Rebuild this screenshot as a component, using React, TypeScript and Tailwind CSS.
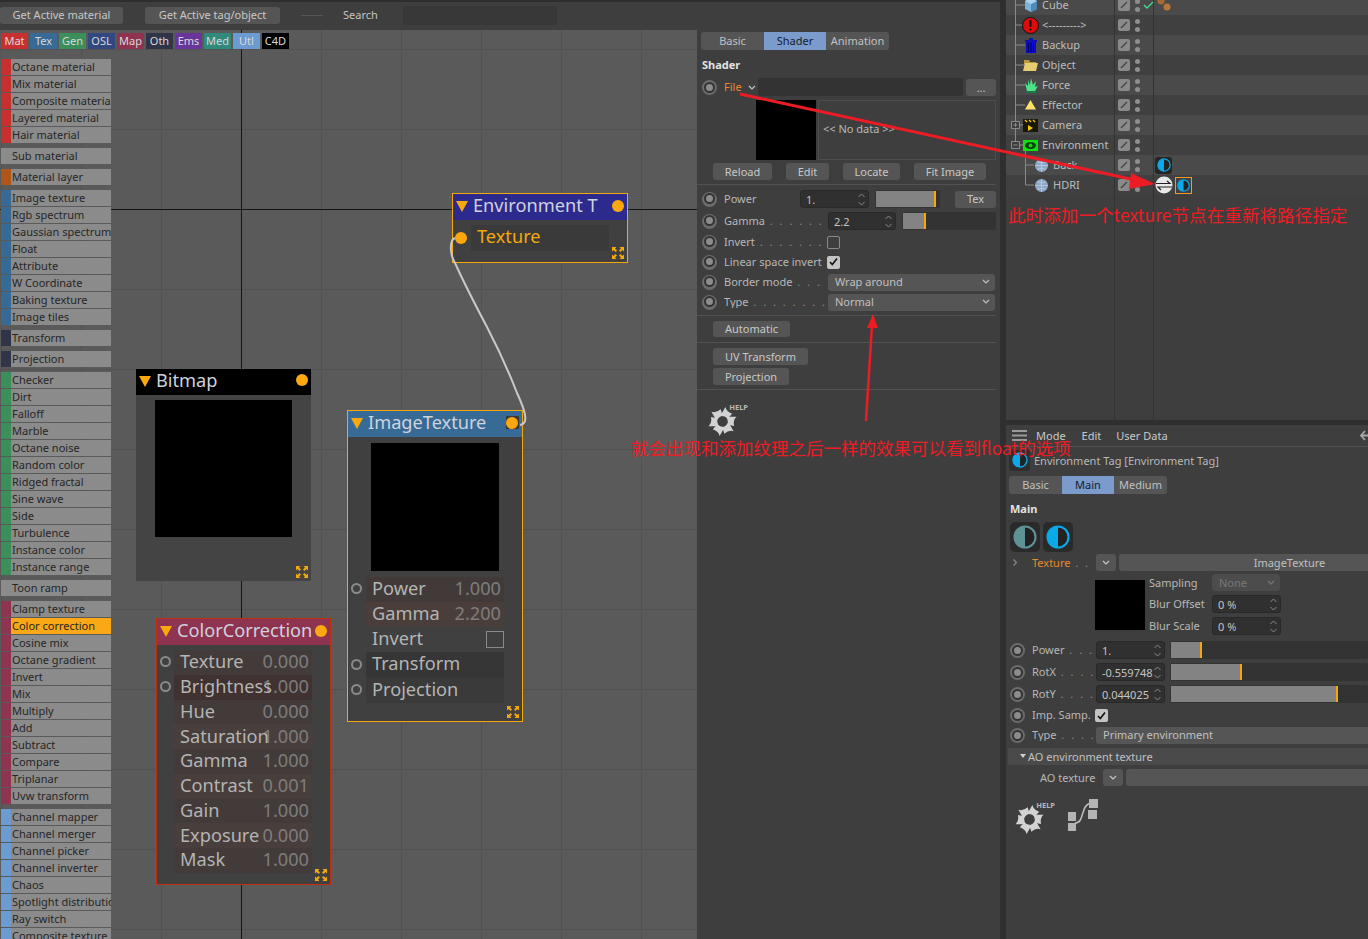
import React from "react";

const font = "font-['Noto_Sans','Open_Sans',sans-serif]";

function Radio() {
  return (
    <span className="flex h-[15px] w-[15px] shrink-0 items-center justify-center rounded-full bg-[#6c6c6c]">
      <span className="h-[11px] w-[11px] rounded-full border-2 border-[#333] bg-[#8c8c8c]" />
    </span>
  );
}

function Chevron({ className = "" }: { className?: string }) {
  return (
    <svg width="8" height="5" viewBox="0 0 8 5" className={className}>
      <path d="M1 1l3 3 3-3" fill="none" stroke="currentColor" strokeWidth="1.2" />
    </svg>
  );
}

function Spin({ value, className = "" }: { value: string; className?: string }) {
  return (
    <div className={"flex h-[18px] items-center justify-between rounded-[3px] border border-[#292929] bg-[#303030] pl-[5px] pr-[3px] text-[#c4c4c4] " + className}>
      <span className="overflow-hidden whitespace-nowrap">{value}</span>
      <svg width="7" height="13" viewBox="0 0 7 13" className="shrink-0 text-[#8a8a8a]">
        <path d="M.5 4L3.500 1l3 3M.5 9l3 3 3-3" fill="none" stroke="currentColor" />
      </svg>
    </div>
  );
}

function Bar({ pct, className = "" }: { pct: number; className?: string }) {
  return (
    <div className={"flex h-[18px] items-stretch rounded-[2px] bg-[#333] p-px " + className}>
      <div className="border-r-2 border-[#f5a80c] bg-[#838383]" style={{ width: pct + "%" }} />
    </div>
  );
}

function Btn({ children, className = "" }: { children: React.ReactNode; className?: string }) {
  return (
    <div className={"flex items-center justify-center rounded-[3px] bg-[#555] text-[#c8c8c8] " + className}>{children}</div>
  );
}

function Select({ value, className = "" }: { value: string; className?: string }) {
  return (
    <div className={"flex h-[17px] items-center justify-between rounded-[3px] bg-[#555] pl-[7px] pr-[5px] text-[#c0c0c0] " + className}>
      <span>{value}</span>
      <Chevron />
    </div>
  );
}

function Check({ on }: { on?: boolean }) {
  return on ? (
    <span className="flex h-[13px] w-[13px] items-center justify-center rounded-[2px] bg-[#c4c4c4]">
      <svg width="9" height="9" viewBox="0 0 9 9">
        <path d="M1 5l2.300 2.500L8 1.500" fill="none" stroke="#111" strokeWidth="1.6" />
      </svg>
    </span>
  ) : (
    <span className="h-[13px] w-[13px] rounded-[2px] border border-[#8a8a8a]" />
  );
}

function Sep({ className = "" }: { className?: string }) {
  return <div className={"h-px bg-[#525252] " + className} />;
}

function Dots({ n }: { n: number }) {
  return <span className="tracking-[2px] text-[#8a8a8a]">{" " + ". ".repeat(n).trim()}</span>;
}

function HelpIcon({ graph }: { graph?: boolean }) {
  return (
    <div className="flex items-start gap-3">
      <div className="relative h-[33px] w-[40px]">
        <svg width="29" height="29" viewBox="-15 -15 30 30" className="absolute bottom-0 left-0">
          {[0, 60, 120, 180, 240, 300].map((a) => (
            <path key={a} transform={`rotate(${a})`} d="M-2.500-5.500L3-15Q4-10 10-8L5.500-3Q2-6-2.500-5.500z" fill="#d2d2d2" />
          ))}
        </svg>
        <span className="absolute right-0 top-0 text-[7.5px] font-bold leading-[9px] text-[#b8b8b8]">HELP</span>
      </div>
      {graph && (
        <svg width="32" height="32" viewBox="0 0 32 32" className="mt-[-2px]">
          <path d="M8 24c10 0 5-18 16-20" fill="none" stroke="#bbb" strokeWidth="1.6" />
          <path d="M22 0h9v9h-9zM21 11h9v9h-9zM1 13h8v9H1zM1 24h8v8H1z" fill="#b4b4b4" />
        </svg>
      )}
    </div>
  );
}

function HalfCircle({ size = 16, color = "#0aa9e9" }: { size?: number; color?: string }) {
  return (
    <svg width={size} height={size} viewBox="0 0 16 16">
      <circle cx="8" cy="8" r="7" fill="#222" stroke={color} strokeWidth="1.4" />
      <path d="M8 1a7 7 0 0 0 0 14z" fill={color} />
    </svg>
  );
}

/* ---------- palette ---------- */

const groups: { color: string; items: string[] }[] = [
  { color: "#c8302f", items: ["Octane material", "Mix material", "Composite material", "Layered material", "Hair material"] },
  { color: "", items: ["Sub material"] },
  { color: "#b0561a", items: ["Material layer"] },
  { color: "#376a94", items: ["Image texture", "Rgb spectrum", "Gaussian spectrum", "Float", "Attribute", "W Coordinate", "Baking texture", "Image tiles"] },
  { color: "#2f3449", items: ["Transform"] },
  { color: "#2f3449", items: ["Projection"] },
  { color: "#3a8f5a", items: ["Checker", "Dirt", "Falloff", "Marble", "Octane noise", "Random color", "Ridged fractal", "Sine wave", "Side", "Turbulence", "Instance color", "Instance range"] },
  { color: "", items: ["Toon ramp"] },
  { color: "#8e3350", items: ["Clamp texture", "Color correction", "Cosine mix", "Octane gradient", "Invert", "Mix", "Multiply", "Add", "Subtract", "Compare", "Triplanar", "Uvw transform"] },
  { color: "#6c9bd2", items: ["Channel mapper", "Channel merger", "Channel picker", "Channel inverter", "Chaos", "Spotlight distribution", "Ray switch", "Composite texture"] },
];

const tabs: [string, string][] = [
  ["Mat", "bg-[#c8302f]"],
  ["Tex", "bg-[#376a94]"],
  ["Gen", "bg-[#3a8f5a]"],
  ["OSL", "bg-[#33487f]"],
  ["Map", "bg-[#8e3350]"],
  ["Oth", "bg-[#2f3449]"],
  ["Ems", "bg-[#6a359b]"],
  ["Med", "bg-[#318a7c]"],
  ["Utl", "bg-[#6c9bd2]"],
  ["C4D", "bg-black"],
];

function Palette() {
  return (
    <div className="flex w-[111px] flex-col gap-[5px] pl-px">
      {groups.map((g, i) => (
        <div key={i} className="flex flex-col gap-px">
          {g.items.map((it) => {
            const active = it === "Color correction";
            return (
              <div key={it} className={"flex h-[16px] items-center overflow-hidden " + (active ? "bg-[#fba816]" : "bg-[#8b8b8b]")}>
                <span className="h-full w-[10px] shrink-0 bg-[#8b8b8b]" style={g.color ? { background: g.color } : undefined} />
                <span className="whitespace-nowrap pb-[2px] pl-px text-[#262626]">{it}</span>
              </div>
            );
          })}
        </div>
      ))}
    </div>
  );
}

/* ---------- nodes ---------- */

function Expand() {
  return (
    <svg width="12" height="12" viewBox="0 0 12 12" className="absolute bottom-[3px] right-[3px]">
      <path d="M0 0h4.500L3 1.500 5 3.500 3.500 5 1.500 3 0 4.500zM12 0v4.500L10.500 3 8.500 5 7 3.500 9 1.500 7.500 0zM0 12V7.500L1.500 9l2-2L5 8.500 3 10.500 4.500 12zM12 12H7.500L9 10.500l-2-2L8.500 7l2 2L12 7.500z" fill="#f5a80c" />
    </svg>
  );
}

function Dot({ className = "" }: { className?: string }) {
  return <span className={"absolute h-[12px] w-[12px] rounded-full bg-[#fba80e] " + className} />;
}

function Port({ top }: { top: number }) {
  return <span className="absolute left-[3px] h-[11px] w-[11px] rounded-full border-2 border-[#8a8a8a]" style={{ top }} />;
}

function NodeHead({ title, className = "" }: { title: string; className?: string }) {
  return (
    <div className={"relative flex h-[26px] shrink-0 items-center pb-[4px] pl-[3px] text-[18.2px] leading-none text-[#cfd2dc] " + className}>
      <svg width="12" height="11" viewBox="0 0 12 11" className="mr-[5px] mt-[2px] shrink-0">
        <path d="M0 0h12L6 11z" fill="#fba80e" />
      </svg>
      <span className="whitespace-nowrap">{title}</span>
    </div>
  );
}

function NodeRow({ label, value, className = "", box }: { label: string; value?: string; className?: string; box?: boolean }) {
  return (
    <div className={"relative flex items-center justify-end pb-[2px] pr-[3px] text-[18.2px] leading-none text-[#b4b4b4] " + className}>
      <span className="absolute left-[6px] whitespace-nowrap">{label}</span>
      {value && <span className="text-[#7d7d7d]">{value}</span>}
      {box && <span className="mr-[-3px] mt-[2px] h-[17px] w-[18px] border border-[#8a8a8a]" />}
    </div>
  );
}

function Nodes() {
  const cc: [string, string][] = [
    ["Texture", "0.000"],
    ["Brightness", "1.000"],
    ["Hue", "0.000"],
    ["Saturation", "1.000"],
    ["Gamma", "1.000"],
    ["Contrast", "0.001"],
    ["Gain", "1.000"],
    ["Exposure", "0.000"],
    ["Mask", "1.000"],
  ];
  return (
    <>
      {/* Environment T */}
      <div className="absolute left-[452px] top-[163px] h-[70px] w-[176px] border border-[#f5a80c] bg-[#404040]">
        <NodeHead title="Environment T" className="bg-[#2d2a8e]" />
        <Dot className="right-[3px] top-[6px]" />
        <Dot className="left-[2px] top-[38px]" />
        <div className="ml-[18px] mt-[5px] flex h-[26px] w-[138px] items-center bg-[#3a3a3a] pb-[3px] pl-[6px] text-[18.2px] leading-none text-[#f5a80c]">Texture</div>
        <Expand />
      </div>

      {/* Bitmap */}
      <div className="absolute left-[136px] top-[339px] h-[212px] w-[175px] bg-[#444]">
        <NodeHead title="Bitmap" className="bg-black" />
        <Dot className="right-[3px] top-[5px]" />
        <div className="ml-[19px] mt-[5px] h-[137px] w-[137px] bg-black" />
        <Expand />
      </div>

      {/* ImageTexture */}
      <div className="absolute left-[347px] top-[380px] h-[312px] w-[176px] border border-[#f5a80c] bg-[#404040]">
        <NodeHead title="ImageTexture" className="bg-[#376a94]" />
        <span className="absolute right-[3px] top-[5px] h-[13px] w-[13px] bg-[#3a3a3a]" />
        <Dot className="right-[4px] top-[6px]" />
        <div className="ml-[23px] mt-[6px] h-[128px] w-[128px] bg-black" />
        <div className="ml-[18px] mt-[6px] w-[138px]">
          <NodeRow label="Power" value="1.000" className="h-[25px] bg-[#423a38]" />
          <NodeRow label="Gamma" value="2.200" className="h-[25px] bg-[#4a3e3b]" />
          <NodeRow label="Invert" box className="h-[25px]" />
          <NodeRow label="Transform" className="h-[25px] bg-[#363636]" />
          <NodeRow label="Projection" className="h-[26px] bg-[#3a3a3a]" />
        </div>
        <Port top={172} />
        <Port top={248} />
        <Port top={273} />
        <Expand />
      </div>

      {/* ColorCorrection */}
      <div className="absolute left-[156px] top-[588px] h-[267px] w-[175px] border border-[#c0300f] bg-[#404040]">
        <NodeHead title="ColorCorrection" className="bg-[#8e3350]" />
        <Dot className="right-[3px] top-[6px]" />
        <div className="ml-[17px] mt-[5px] w-[138px]">
          {cc.map(([l, v], i) => (
            <NodeRow key={l} label={l} value={v} className={"h-[24.75px] " + (i === 1 ? "bg-[#3f3230]" : i % 2 ? "bg-[#483e3b]" : "bg-[#433b39]")} />
          ))}
        </div>
        <Port top={37} />
        <Port top={62} />
        <Expand />
      </div>
    </>
  );
}

/* ---------- shader panel ---------- */

function TabStrip({ items, active, className = "" }: { items: [string, number][]; active: string; className?: string }) {
  return (
    <div className={"flex h-[18px] overflow-hidden rounded-[3px] " + className}>
      {items.map(([t, w]) => (
        <div key={t} style={{ width: w }} className={"flex items-center justify-center pb-px " + (t === active ? "bg-[#7a9bcb] text-[#16202c]" : "bg-[#555] text-[#c0c0c0]")}>
          {t}
        </div>
      ))}
    </div>
  );
}

function PanelRow({ top, children }: { top: number; children: React.ReactNode }) {
  return (
    <div className="flex h-[18px] items-center pl-[5px] text-[#b8b8b8] [&>span]:pb-px" style={{ marginTop: top }}>
      <Radio />
      {children}
    </div>
  );
}

function ShaderPanel() {
  return (
    <div className="flex w-[303px] shrink-0 flex-col bg-[#3e3e3e] pr-[4px] pt-[2px]">
      <TabStrip className="ml-[4px] w-[188px]" active="Shader" items={[["Basic", 63], ["Shader", 62], ["Animation", 63]]} />
      <div className="ml-[5px] mt-[7px] h-[16px] font-bold leading-[16px] text-[#e2e2e2]">Shader</div>
      <div className="mt-[5px] flex h-[18px] items-center pl-[5px]">
        <Radio />
        <span className="ml-[7px] pb-[2px] text-[#e88a2d]">File</span>
        <Chevron className="ml-[6px] text-[#c8c8c8]" />
        <div className="ml-[2px] h-[18px] w-[207px] rounded-[3px] bg-[#333]" />
        <Btn className="ml-[3px] h-[17px] w-[30px]">...</Btn>
      </div>
      <div className="ml-[59px] mt-[4px] flex h-[60px] gap-[2px]">
        <div className="w-[60px] bg-black" />
        <div className="flex w-[178px] items-center border border-[#4d4d4d] pb-[3px] pl-[4px] text-[#b8b8b8]">{"<< No data >>"}</div>
      </div>
      <div className="ml-[16px] mt-[3px] flex h-[17px] gap-[14px]">
        <Btn className="w-[59px] pb-px">Reload</Btn>
        <Btn className="w-[43px] pb-px">Edit</Btn>
        <Btn className="w-[57px] pb-px">Locate</Btn>
        <Btn className="w-[72px] pb-px">Fit Image</Btn>
      </div>
      <Sep className="mt-[4px]" />
      <PanelRow top={5}>
        <span className="ml-[7px] w-[76px]">Power</span>
        <Spin value="1." className="w-[69px]" />
        <Bar pct={95} className="ml-[6px] w-[65px]" />
        <Btn className="ml-[15px] h-[17px] w-[41px] pb-px">Tex</Btn>
      </PanelRow>
      <PanelRow top={4}>
        <span className="ml-[7px] w-[104px] overflow-hidden whitespace-nowrap">Gamma<Dots n={7} /></span>
        <Spin value="2.2" className="w-[68px]" />
        <Bar pct={25} className="ml-[6px] w-[94px]" />
      </PanelRow>
      <PanelRow top={3}>
        <span className="ml-[7px] w-[103px] overflow-hidden whitespace-nowrap">Invert<Dots n={8} /></span>
        <Check />
      </PanelRow>
      <PanelRow top={2}>
        <span className="ml-[7px] w-[103px] whitespace-nowrap">Linear space invert</span>
        <Check on />
      </PanelRow>
      <PanelRow top={2}>
        <span className="ml-[7px] w-[104px] overflow-hidden whitespace-nowrap">Border mode<Dots n={3} /></span>
        <Select value="Wrap around" className="w-[167px] pb-px" />
      </PanelRow>
      <PanelRow top={2}>
        <span className="ml-[7px] w-[104px] overflow-hidden whitespace-nowrap">Type<Dots n={8} /></span>
        <Select value="Normal" className="w-[167px] pb-px" />
      </PanelRow>
      <Sep className="mt-[4px]" />
      <Btn className="ml-[16px] mt-[5px] h-[16px] w-[77px] pb-px">Automatic</Btn>
      <Sep className="mt-[5px]" />
      <Btn className="ml-[16px] mt-[5px] h-[17px] w-[95px] pb-px">UV Transform</Btn>
      <Btn className="ml-[16px] mt-[3px] h-[17px] w-[76px] pb-px">Projection</Btn>
      <Sep className="mt-[4px]" />
      <div className="ml-[11px] mt-[13px]">
        <HelpIcon />
      </div>
    </div>
  );
}

/* ---------- tree ---------- */

function TreeIcon({ kind }: { kind: string }) {
  switch (kind) {
    case "cube":
      return (
        <svg width="14" height="16" viewBox="0 0 14 16">
          <path d="M7 1l6 3v8l-6 3-6-3V4z" fill="#79b4dc" />
          <path d="M7 7l6-3v8l-6 3z" fill="#4c8ab8" />
          <path d="M1 4l6-3 6 3-6 3z" fill="#a9d4ef" />
        </svg>
      );
    case "stop":
      return (
        <svg width="17" height="17" viewBox="0 0 17 17">
          <circle cx="8.500" cy="8.500" r="8" fill="#e00b0b" stroke="#111" />
          <path d="M7.500 3h2v7h-2zM7.500 11.500h2v2h-2z" fill="#111" />
        </svg>
      );
    case "bin":
      return (
        <svg width="12" height="15" viewBox="0 0 12 15">
          <path d="M0 2h12v2H0zM4 0h4v2H4z" fill="#1111b0" />
          <path d="M1 4h10v11H1z" fill="#0808d0" />
          <path d="M3.500 5v9M6 5v9M8.500 5v9" stroke="#000060" />
        </svg>
      );
    case "folder":
      return (
        <svg width="15" height="12" viewBox="0 0 15 12">
          <path d="M1 1h5l1 2h6v2H1z" fill="#b89b3c" />
          <path d="M0 12l2-8h13l-2 8z" fill="#e6cd72" />
        </svg>
      );
    case "force":
      return (
        <svg width="16" height="15" viewBox="0 0 16 15">
          <path d="M3 13h10l1 2H2z" fill="#187a40" />
          <path d="M4 13L2 5l3 3 0-6 2 5 1-7 2 7 3-4-1 6 3-1-3 5z" fill="#4fe08a" />
        </svg>
      );
    case "tri":
      return (
        <svg width="11" height="10" viewBox="0 0 11 10">
          <path d="M5.500 0L11 9.500H0z" fill="#fde168" />
        </svg>
      );
    case "cam":
      return (
        <svg width="15" height="13" viewBox="0 0 15 13">
          <path d="M0 0h15v13H0z" fill="#1a1608" />
          <path d="M2 1l2 2M6 1l2 2M10 1l2 2" stroke="#f0c800" strokeWidth="1.400" />
          <path d="M5 6l5 3-5 3z" fill="#f0c800" />
        </svg>
      );
    case "env":
      return (
        <svg width="15" height="11" viewBox="0 0 15 11">
          <path d="M0 0h15v11H0z" fill="#10e010" />
          <ellipse cx="7.500" cy="5.500" rx="5.500" ry="3.500" fill="#063c06" />
          <circle cx="7.500" cy="5.500" r="2" fill="#0fd00f" />
        </svg>
      );
    default:
      return (
        <svg width="13" height="13" viewBox="0 0 13 13">
          <circle cx="6.500" cy="6.500" r="6.500" fill="#8fa8c8" />
          <path d="M0 6.500h13M6.500 0v13M2 2.500c3 1.500 6 1.500 9 0M2 10.500c3-1.500 6-1.500 9 0" stroke="#c2d2e6" strokeWidth=".7" fill="none" />
        </svg>
      );
  }
}

const tree: { name: string; icon: string; link: string; deep?: boolean; tag?: React.ReactNode }[] = [
  {
    name: "Cube",
    icon: "cube",
    link: "t",
    tag: (
      <span className="ml-[-12px] flex items-center gap-[3px]">
        <svg width="11" height="8" viewBox="0 0 11 8"><path d="M1 4l3 3 6-6" fill="none" stroke="#44dc8c" strokeWidth="1.400" /></svg>
        <svg width="14" height="20" viewBox="0 0 14 20"><circle cx="4" cy="6" r="3.500" fill="#a86a30" /><circle cx="10" cy="12" r="3.500" fill="#b8753a" /></svg>
      </span>
    ),
  },
  { name: "<--------->", icon: "stop", link: "t" },
  { name: "Backup", icon: "bin", link: "t" },
  { name: "Object", icon: "folder", link: "t" },
  { name: "Force", icon: "force", link: "t" },
  { name: "Effector", icon: "tri", link: "t" },
  { name: "Camera", icon: "cam", link: "p" },
  { name: "Environment", icon: "env", link: "m" },
  {
    name: "Back",
    icon: "ball",
    link: "c",
    deep: true,
    tag: (
      <span className="flex h-[17px] w-[17px] items-center justify-center rounded-[3px] bg-[#262626]">
        <HalfCircle size={14} />
      </span>
    ),
  },
  {
    name: "HDRI",
    icon: "ball",
    link: "l",
    deep: true,
    tag: (
      <span className="flex items-center gap-[2px]">
        <svg width="18" height="18" viewBox="0 0 18 18">
          <circle cx="9" cy="9" r="8.500" fill="#e8e8e8" />
          <path d="M1 7.500h14L12 5M17 11H3l3 3" fill="none" stroke="#222" strokeWidth="1.200" />
        </svg>
        <span className="flex h-[17px] w-[17px] items-center justify-center border border-[#f09a28]">
          <HalfCircle size={13} />
        </span>
      </span>
    ),
  },
];

function Connector({ link }: { link: string }) {
  // left part of a row: tree lines and +/- boxes
  return (
    <svg width="36" height="20" viewBox="0 0 36 20" className="absolute left-0 top-0">
      {(link === "t" || link === "p") && <path d="M9.500 0v20M9.500 10H19" stroke="#8a8a8a" />}
      {link === "m" && <path d="M9.500 0v6M14 10h5" stroke="#8a8a8a" />}
      {link === "p" && <path d="M5.500 6.500h8v7h-8z M7.500 10h4M9.500 8v4" fill="#3e3e3e" stroke="#8a8a8a" />}
      {link === "m" && <path d="M5.500 6.500h8v7h-8z M7.500 10h4M19.500 15v5" fill="#3e3e3e" stroke="#8a8a8a" />}
      {link === "c" && <path d="M19.500 0v20M19.500 10H28" stroke="#8a8a8a" />}
      {link === "l" && <path d="M19.500 0v10H28" stroke="#8a8a8a" fill="none" />}
    </svg>
  );
}

function Tree() {
  return (
    <div className="mt-[-5px] flex h-[425px] flex-col overflow-hidden">
      {tree.map((r, i) => (
        <div key={r.name} className={"flex h-[20px] shrink-0 " + (i % 2 === 0 ? "bg-[#4a4a4a]" : "bg-[#404040]")}>
          <div className={"relative flex w-[108px] shrink-0 items-center text-[#bcbcbc] " + (r.deep ? "pl-[26px]" : "pl-[15px]")}>
            <Connector link={r.link} />
            <span className="relative flex w-[19px] justify-center"><TreeIcon kind={r.icon} /></span>
            <span className="ml-[2px] whitespace-nowrap pb-[2px]">{r.name}</span>
          </div>
          <div className="flex w-[40px] shrink-0 items-center gap-[5px] border-x border-[#333] pl-[3px]">
            <span className="flex h-[12px] w-[12px] items-center justify-center rounded-[2px] bg-[#8a8a8a]">
              <svg width="8" height="8" viewBox="0 0 8 8"><path d="M1 7l6-6" stroke="#444" strokeWidth="1.200" /></svg>
            </span>
            <span className="flex flex-col gap-[3px]">
              <span className="h-[5px] w-[5px] rounded-full bg-[#8e8e8e]" />
              <span className="h-[5px] w-[5px] rounded-full bg-[#8e8e8e]" />
            </span>
          </div>
          <div className="flex items-center pl-[1px]">{r.tag}</div>
        </div>
      ))}
      <div className="flex grow">
        <div className="w-[108px]" />
        <div className="w-[40px] border-x border-[#333]" />
      </div>
    </div>
  );
}

/* ---------- attribute manager ---------- */

function LabeledRow({ label, dots, top, children }: { label: string; dots: number; top: number; children: React.ReactNode }) {
  return (
    <div className="flex h-[18px] items-center pl-[4px] text-[#b8b8b8]" style={{ marginTop: top }}>
      <Radio />
      <span className="ml-[7px] w-[64px] shrink-0 overflow-hidden whitespace-nowrap pb-px">{label}<Dots n={dots} /></span>
      {children}
    </div>
  );
}

function Attributes() {
  return (
    <div className="flex grow flex-col bg-[#3e3e3e]">
      <div className="flex h-[22px] shrink-0 items-center border-b border-[#525252] pb-px text-[#c8c8c8]">
        <svg width="15" height="11" viewBox="0 0 15 11" className="ml-[6px]">
          <path d="M0 0h15v2H0zM0 4.500h15v2H0zM0 9h15v2H0z" fill="#9a9a9a" />
        </svg>
        <span className="ml-[9px]">Mode</span>
        <span className="ml-[16px]">Edit</span>
        <span className="ml-[15px]">User Data</span>
        <svg width="9" height="11" viewBox="0 0 9 11" className="ml-auto mr-0">
          <path d="M6 1L2 5.500 6 10M2 5.500h7" fill="none" stroke="#a8a8a8" strokeWidth="1.800" />
        </svg>
      </div>
      <div className="flex h-[26px] items-center pl-[3px]">
        <span className="flex h-[21px] w-[21px] items-center justify-center rounded-[3px] bg-[#2e2e2e]">
          <HalfCircle size={16} />
        </span>
        <span className="ml-[4px] text-[#b8b8b8]">Environment Tag [Environment Tag]</span>
      </div>
      <TabStrip className="ml-[3px] mt-[3px] w-[158px]" active="Main" items={[["Basic", 53], ["Main", 52], ["Medium", 53]]} />
      <div className="ml-[4px] mt-[7px] h-[16px] font-bold leading-[16px] text-[#e2e2e2]">Main</div>
      <div className="ml-[4px] mt-[5px] flex gap-[3px]">
        <span className="flex h-[30px] w-[30px] items-center justify-center rounded-[5px] bg-[#2a2a2a]">
          <HalfCircle size={24} color="#5f9297" />
        </span>
        <span className="flex h-[30px] w-[30px] items-center justify-center rounded-[5px] bg-[#2a2a2a]">
          <HalfCircle size={24} />
        </span>
      </div>
      <div className="mt-[2px] flex h-[17px] items-center">
        <Chevron className="ml-[5px] -rotate-90 text-[#8a8a8a]" />
        <span className="ml-[13px] w-[64px] overflow-hidden whitespace-nowrap text-[#e88a2d]">Texture<Dots n={2} /></span>
        <Btn className="h-[17px] w-[20px]"><Chevron /></Btn>
        <div className="ml-[3px] flex h-[17px] grow items-center justify-center rounded-l-[3px] bg-[#555] pl-[92px] text-[#c0c0c0]">ImageTexture</div>
      </div>
      <div className="ml-[89px] mt-[3px] flex h-[62px] items-start">
        <div className="mt-[6px] h-[50px] w-[50px] shrink-0 bg-black" />
        <div className="ml-[4px] flex flex-col text-[#b8b8b8]">
          <div className="flex h-[17px] items-center">
            <span className="w-[63px]">Sampling</span>
            <div className="flex h-[17px] w-[68px] items-center justify-between rounded-[3px] bg-[#4c4c4c] pl-[7px] pr-[5px] text-[#787878]">None<Chevron /></div>
          </div>
          <div className="mt-[4px] flex items-center">
            <span className="w-[63px] pb-px">Blur Offset</span>
            <Spin value="0 %" className="w-[69px]" />
          </div>
          <div className="mt-[4px] flex items-center">
            <span className="w-[63px] pb-px">Blur Scale</span>
            <Spin value="0 %" className="w-[69px]" />
          </div>
        </div>
      </div>
      <LabeledRow label="Power" dots={3} top={5}>
        <Spin value="1." className="w-[69px]" />
        <Bar pct={16} className="ml-[5px] grow" />
      </LabeledRow>
      <LabeledRow label="RotX" dots={4} top={4}>
        <Spin value="-0.559748" className="w-[69px]" />
        <Bar pct={36} className="ml-[5px] grow" />
      </LabeledRow>
      <LabeledRow label="RotY" dots={4} top={4}>
        <Spin value="0.044025" className="w-[69px]" />
        <Bar pct={85} className="ml-[5px] grow" />
      </LabeledRow>
      <div className="mt-[3px] flex h-[18px] items-center pl-[4px] text-[#b8b8b8]">
        <Radio />
        <span className="ml-[7px] w-[63px] whitespace-nowrap pb-px">Imp. Samp.</span>
        <Check on />
      </div>
      <LabeledRow label="Type" dots={4} top={2}>
        <div className="flex h-[17px] grow items-center rounded-l-[3px] bg-[#555] pb-px pl-[7px] text-[#c0c0c0]">Primary environment</div>
      </LabeledRow>
      <div className="ml-[2px] mt-[4px] flex h-[17px] items-center bg-[#4a4a4a] pl-[11px] text-[#c0c0c0]">
        <svg width="8" height="5" viewBox="0 0 8 5" className="mr-px"><path d="M1 0h6L4 4z" fill="#d0d0d0" /></svg>
        AO environment texture
      </div>
      <div className="mt-[4px] flex h-[17px] items-center pl-[34px] text-[#b8b8b8]">
        <span className="w-[63px]">AO texture</span>
        <Btn className="h-[17px] w-[20px]"><Chevron /></Btn>
        <div className="ml-[3px] h-[17px] grow rounded-l-[3px] bg-[#555]" />
      </div>
      <div className="ml-[9px] mt-[15px]">
        <HelpIcon graph />
      </div>
    </div>
  );
}

export default function App() {
  return (
    <div className={"relative flex h-[939px] w-[1368px] overflow-hidden bg-[#3e3e3e] text-[11px] leading-none " + font}>
      <div className="flex w-[1000px] shrink-0 flex-col">
        {/* top bar */}
        <div className="flex h-[30px] shrink-0 items-center border-t-2 border-[#2e2e2e] pb-[2px] text-[#c4c4c4]">
          <Btn className="h-[17px] w-[123px] pb-[2px]">Get Active material</Btn>
          <Btn className="ml-[22px] h-[17px] w-[135px] pb-[2px]">Get Active tag/object</Btn>
          <div className="ml-[21px] h-px w-[22px] bg-[#555]" />
          <span className="ml-[20px] w-[60px] pb-[2px]">Search</span>
          <div className="h-[19px] w-[154px] rounded-[3px] bg-[#383838]" />
        </div>
        <div className="flex min-h-0 grow">
          {/* node canvas */}
          <div className="relative w-[697px] shrink-0 overflow-hidden bg-[#5a5a5a] bg-[linear-gradient(to_right,#525252_1px,transparent_1px),linear-gradient(to_bottom,#525252_1px,transparent_1px)] bg-[size:80px_80px] bg-[position:1px_19px]">
            <div className="absolute left-[241px] top-0 h-full w-px bg-[#151515]" />
            <div className="absolute left-0 top-[179px] h-px w-full bg-[#151515]" />
            <Nodes />
            <svg width="697" height="909" className="absolute left-0 top-0">
              <path d="M455 208C449 210 450 225 455 233C465 255 478 280 487 297C500 322 510 345 517 363C524 378 530 394 520 395" fill="none" stroke="#c8c8c8" strokeWidth="2" />
            </svg>
            <div className="relative flex flex-col">
              <div className="mt-[3px] flex h-[16px] gap-[2px] pl-px">
                {tabs.map(([t, c]) => (
                  <div key={t} className={"flex w-[27px] items-center justify-center pb-px text-[#d8d8d8] " + c}>{t}</div>
                ))}
              </div>
              <div className="mt-[10px]">
                <Palette />
              </div>
            </div>
          </div>
          <ShaderPanel />
        </div>
      </div>

      {/* splitter */}
      <div className="w-[6px] shrink-0 bg-[#2f2f2f]" />

      {/* right column */}
      <div className="flex min-w-0 grow flex-col">
        <Tree />
        <div className="h-[5px] shrink-0 bg-[#2f2f2f]" />
        <Attributes />
      </div>

      {/* red annotations */}
      <svg width="1368" height="939" className="pointer-events-none absolute left-0 top-0">
        <path d="M740 94L1135 180" stroke="#ed1c24" strokeWidth="3" />
        <path d="M1155 184l-24-11-2 16z" fill="#ed1c24" />
        <path d="M866 421l6-96" stroke="#ed1c24" strokeWidth="2.500" />
        <path d="M873 314l-6 14h11z" fill="#ed1c24" />
      </svg>
      <div className="absolute left-[1008px] top-[205px] whitespace-nowrap font-['Noto_Sans_CJK_SC',sans-serif] text-[17.6px] leading-[20px] text-[#ed1c24]">此时添加一个texture节点在重新将路径指定</div>
      <div className="absolute left-[631px] top-[438px] whitespace-nowrap font-['Noto_Sans_CJK_SC',sans-serif] text-[17.5px] leading-[20px] text-[#ed1c24]">就会出现和添加纹理之后一样的效果可以看到float的选项</div>
    </div>
  );
}
